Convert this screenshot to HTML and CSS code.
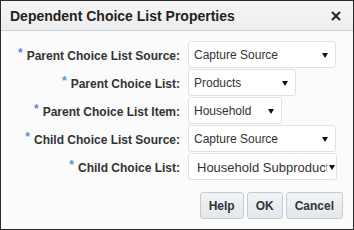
FILE: index.html
```html
<!DOCTYPE html>
<html lang="en">
<head>
  <meta charset="UTF-8"/>
  <meta name="viewport" content="width=device-width,initial-scale=1.0"/>
  <title>Dependent Choice List Properties</title>
  <link rel="stylesheet" href="styles.css">
</head>
<body>
  <div class="dialog">
    <div class="dialog-header">
      <span class="dialog-title">Dependent Choice List Properties</span>
      <button class="close-btn" title="Close">
        <svg viewBox="0 0 10 10"><path d="M1 1L9 9M9 1L1 9"/></svg>
      </button>
    </div>

    <div class="dialog-body">
      <div class="form-grid">
        <label class="field-label"><span class="req">*</span>Parent Choice List Source:</label>
        <div class="choice w-source">
          <span class="choice-text">Capture Source</span>
          <svg class="arrow" viewBox="0 0 6 5"><polygon points="0,0 6,0 3,5"/></svg>
        </div>

        <label class="field-label"><span class="req">*</span>Parent Choice List:</label>
        <div class="choice w-list">
          <span class="choice-text">Products</span>
          <svg class="arrow" viewBox="0 0 6 5"><polygon points="0,0 6,0 3,5"/></svg>
        </div>

        <label class="field-label"><span class="req">*</span>Parent Choice List Item:</label>
        <div class="choice w-item">
          <span class="choice-text">Household</span>
          <svg class="arrow" viewBox="0 0 6 5"><polygon points="0,0 6,0 3,5"/></svg>
        </div>

        <label class="field-label"><span class="req">*</span>Child Choice List Source:</label>
        <div class="choice w-source">
          <span class="choice-text">Capture Source</span>
          <svg class="arrow" viewBox="0 0 6 5"><polygon points="0,0 6,0 3,5"/></svg>
        </div>

        <label class="field-label"><span class="req">*</span>Child Choice List:</label>
        <div class="choice w-child tight">
          <span class="choice-text">Household Subproducts</span>
          <svg class="arrow" viewBox="0 0 6 5"><polygon points="0,0 6,0 3,5"/></svg>
        </div>
      </div>

      <div class="button-bar">
        <button class="btn">Help</button>
        <button class="btn">OK</button>
        <button class="btn">Cancel</button>
      </div>
    </div>
  </div>
</body>
</html>
```

FILE: styles.css
```css
:root {
  --frame: #2b2b2b;
  --header: #f1f1f1;
  --header-line: #c8d0d8;
  --body: #fbfbfb;
  --text: #333;
  --title: #222;
  --req: #5b8fd6;
  --field-border: #dde2e6;
  --btn-border: #c3cbd3;
}
* { box-sizing: border-box; }
html, body { margin: 0; }
body {
  font-family: 'Liberation Sans', Arial, sans-serif;
  color: var(--text);
  font-size: 12px;
}

.dialog {
  width: 354px; height: 230px;
  border: 1px solid var(--frame);
  background: var(--body);
  display: flex; flex-direction: column;
}

.dialog-header {
  height: 30px;
  display: flex; align-items: center; justify-content: space-between;
  padding: 0 12px 0 9px;
  background: linear-gradient(#f6f6f6, #ededed);
  border-bottom: 1px solid var(--header-line);
}
.dialog-title {
  font-size: 14px; font-weight: bold;
  color: var(--title);
}
.close-btn {
  background: none; border: none; padding: 0;
  width: 10px; height: 10px;
  cursor: pointer;
  display: flex;
}
.close-btn svg {
  width: 10px; height: 10px;
  stroke: #2a2a2a; stroke-width: 2.2; fill: none;
}

.dialog-body { padding: 10px 10px 0 0; }

.form-grid {
  display: grid;
  grid-template-columns: 179px auto;
  grid-auto-rows: 27px;
  column-gap: 8px; row-gap: 1px;
  justify-items: start;
}
.field-label {
  justify-self: end; align-self: center;
  font-weight: bold;
  white-space: nowrap;
}
.req {
  color: var(--req);
  margin-right: 4px;
  vertical-align: 3px;
}

.choice {
  height: 27px;
  display: flex; align-items: center; justify-content: space-between;
  padding: 1px 7px 0 5px;
  background: #fff;
  border: 1px solid var(--field-border);
  border-radius: 3px;
}
.choice-text {
  white-space: nowrap;
  overflow: hidden;
}
.choice.tight { padding: 1px 1px 0 8px; font-size: 13px; }
.choice.tight .choice-text { width: 131px; margin-right: 2px; }
.arrow { width: 6px; height: 5px; flex: none; fill: #111; }

.w-source { width: 148px; }
.w-list { width: 108px; }
.w-item { width: 94px; }
.w-child { width: 149px; }

.button-bar {
  display: flex; justify-content: flex-end; gap: 3px;
  margin-top: 12px;
}
.btn {
  height: 27px;
  padding: 0 8px;
  font-family: inherit; font-size: 12px; font-weight: bold;
  color: var(--text);
  background: linear-gradient(#f2f4f6, #e3e7eb);
  border: 1px solid var(--btn-border);
  border-radius: 3px;
  cursor: pointer;
}
```
